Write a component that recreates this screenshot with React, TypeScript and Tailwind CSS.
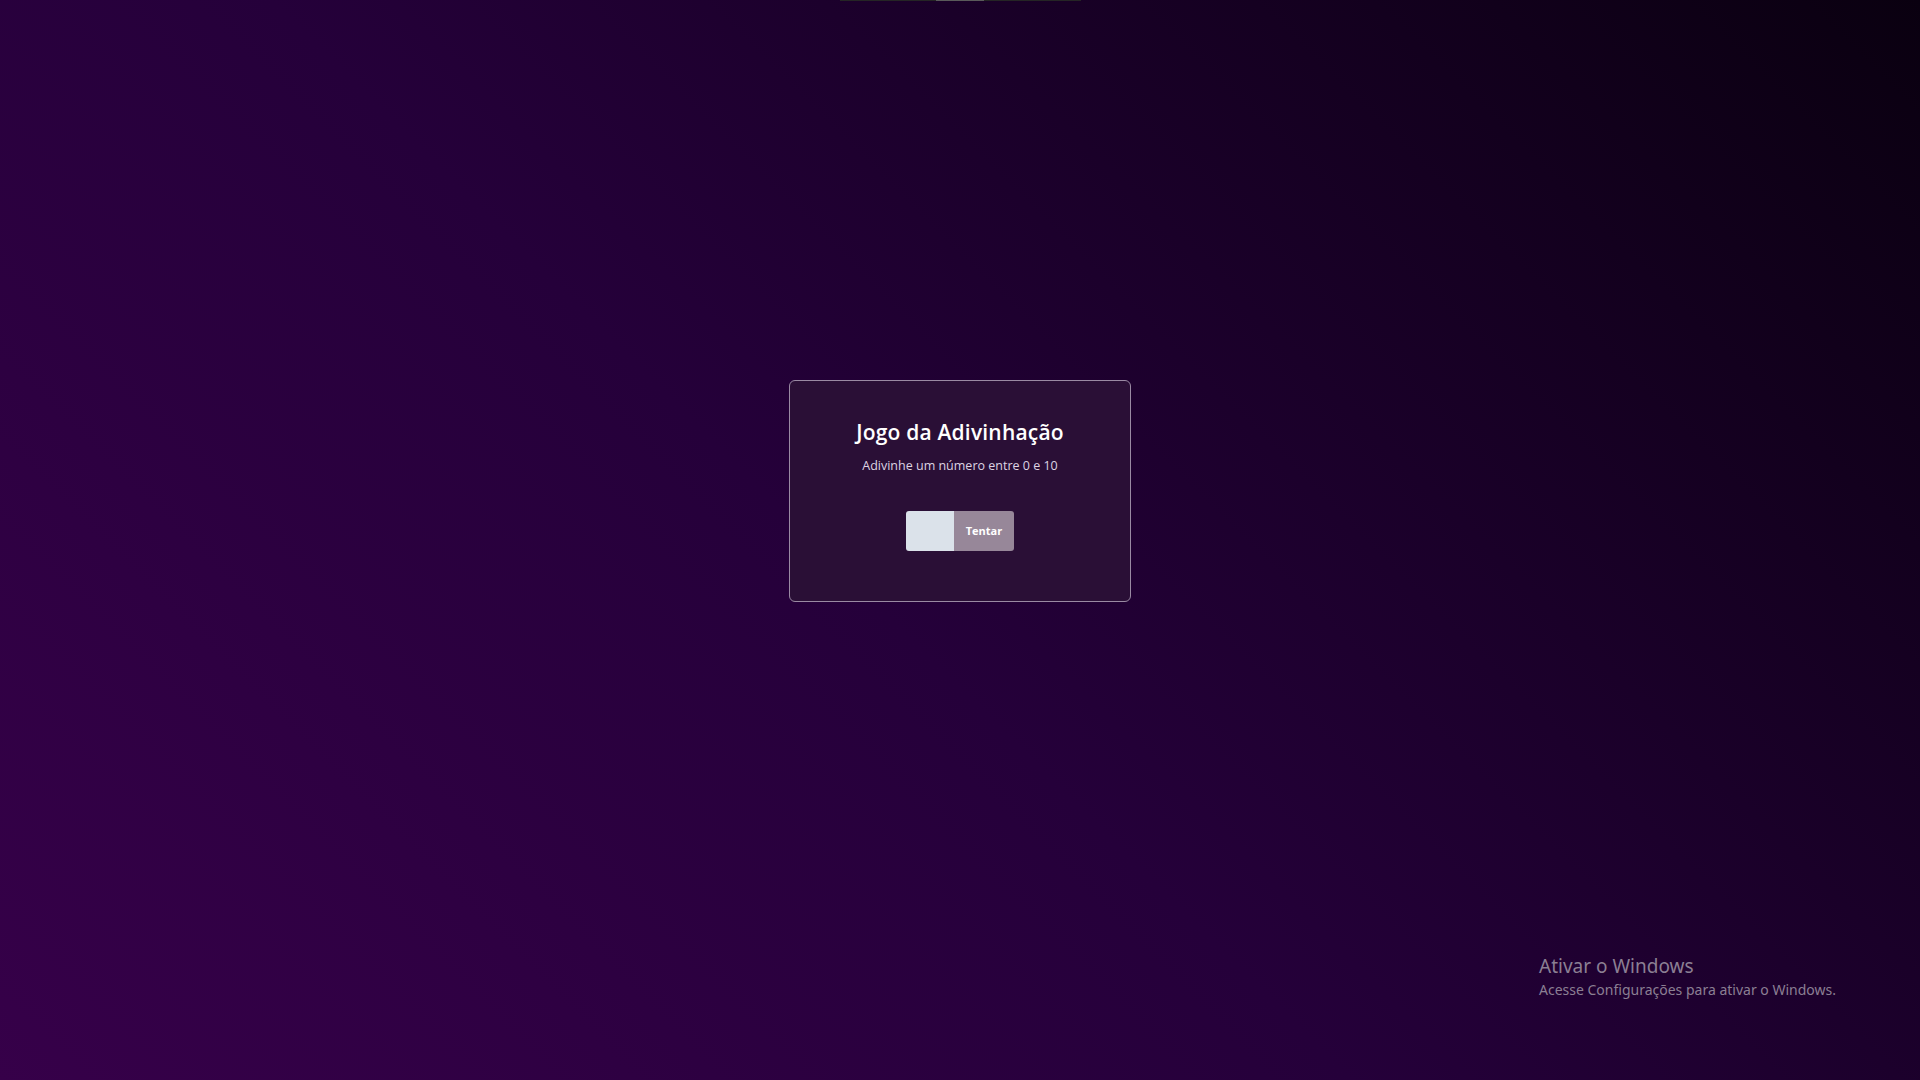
import React from "react";

export default function App() {
  return (
    <div className="relative w-full h-[1080px] overflow-hidden bg-[linear-gradient(45deg,#360049_0%,#25003a_45%,#0a0010_100%)] font-['Open_Sans',sans-serif]">
      <div className="absolute top-0 left-[840px] w-[241px] h-px bg-[#252525]">
        <div className="ml-[96px] w-[48px] h-px bg-[#5a5a5a]" />
      </div>
      <div className="flex flex-col items-center pt-[380px]">
        <div className="w-[342px] h-[222px] rounded-[6px] border border-[#9a8aa3] bg-[#2a0f36] flex flex-col items-center pt-[37px]">
          <h1 className="text-[21px] leading-[28px] font-semibold text-white tracking-[0.2px]">Jogo da Adivinhação</h1>
          <p className="mt-[11px] text-[12.5px] leading-[18px] text-[#ddd3e2]">Adivinhe um número entre 0 e 10</p>
          <div className="mt-[36px] flex h-[40px] rounded-[3px] overflow-hidden">
            <input className="w-[48px] h-[40px] bg-[#dbe2ea] outline-none" />
            <button className="w-[60px] h-[40px] bg-[#978799] text-white text-[11px] font-bold">Tentar</button>
          </div>
        </div>
      </div>
      <div className="absolute left-[1539px] top-[953px] text-[#8b7f93] font-['Noto_Sans',sans-serif]">
        <div className="text-[19px] leading-[27px]">Ativar o Windows</div>
        <div className="text-[14px] leading-[20px]">Acesse Configurações para ativar o Windows.</div>
      </div>
    </div>
  );
}
